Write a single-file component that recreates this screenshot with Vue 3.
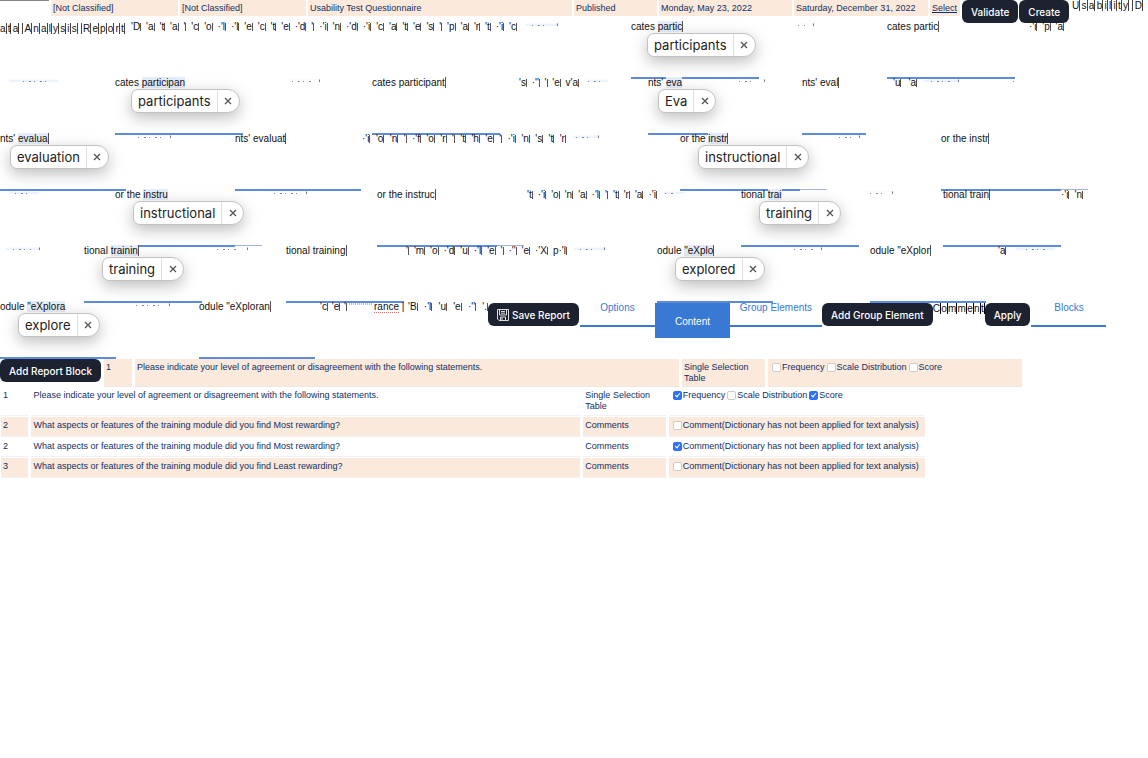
<script setup>
import { reactive } from 'vue'

const STRIP = 1148

const word = (x, pre, text, opts = {}) => ({ kind: 'word', x, pre, text, ...opts })
const keys = (x, end, list) => ({ kind: 'keys', x, end, list: list.split(' ') })
const marks = (x, end, opts = {}) => ({ kind: 'marks', x, end, ...opts })
const gap = (x) => ({ kind: 'gap', x })

const strips = [
  [
    { kind: 'title', x: 0 },
    keys(131, 517, "'D 'a 't 'a ' 'c 'o ·'l ·'l 'e 'c 't 'e ·'d ' ·'i 'n ·'d ·'i 'c 'a 't 'e 's ' 'p 'a 'r 't ·'i 'c"),
    marks(526, 558, { tint: true }), gap(558),
    word(631, 'cates ', 'partic', { hot: true, caret: true, line: 128, chip: 'participants', at: 16 }),
    marks(800, 814),
    word(887, 'cates ', 'partic', { caret: true, line: 128 }),
    keys(1029, 1064, "·'i 'p 'a"), gap(1064),
  ],
  [
    marks(9, 58, { tint: true, bare: true }), gap(58),
    word(115, 'cates ', 'participan', { hot: true, line: 128, chip: 'participants', at: 16 }),
    marks(285, 320), gap(320),
    word(372, 'cates ', 'participant', { caret: true, line: 128 }),
    keys(519, 579, "'s ·'' ' 'e v'a"),
    marks(587, 608, { tint: true, bare: true }), gap(608),
    word(648, "nts' ", 'eva', { hot: true, line: 64, chip: 'Eva', at: 10 }),
    marks(733, 765), gap(765),
    word(802, "nts' ", 'eval', { caret: true, line: 64 }),
    keys(893, 917, "'u 'a"),
    marks(924, 959, { tint: true }), gap(959),
    marks(1018, 1025, { bare: true }), gap(1025),
  ],
  [
    word(0, "nts' ", 'evalua', { hot: true, caret: true, line: 126, chip: 'evaluation', at: 10 }),
    marks(126, 171), gap(171),
    word(235, "nts' ", 'evaluat', { caret: true, line: 126 }),
    keys(362, 566, "·'i 'o 'n ' ·'f 'o 'r ' 't 'h 'e ' ·'i 'n 's 't 'r"),
    marks(573, 599, { tint: true }), gap(599),
    word(680, 'or the ', 'instr', { hot: true, caret: true, line: 120, tail: 27, chip: 'instructional', at: 18 }),
    marks(838, 860), gap(860),
    word(941, 'or the ', 'instr', { caret: true, line: 120, tail: 27 }),
  ],
  [
    marks(9, 39, { tint: true, bare: true }), gap(39),
    word(115, 'or the ', 'instru', { hot: true, line: 120, tail: 27, chip: 'instructional', at: 18 }),
    marks(262, 307), gap(307),
    word(377, 'or the ', 'instruc', { caret: true, line: 120, tail: 27 }),
    keys(527, 657, "'t ·'i 'o 'n 'a ·'l ' 't 'r 'a ·'i"),
    marks(664, 684, { bare: true, tint: true }), gap(684),
    word(741, 'tional ', 'trai', { hot: true, line: 118, chip: 'training', at: 18 }),
    marks(866, 893), gap(893),
    word(943, 'tional ', 'train', { caret: true, line: 118 }),
    keys(1061, 1083, "·'i 'n"), gap(1083),
  ],
  [
    marks(6, 40, { tint: true }), gap(40),
    word(84, 'tional ', 'trainin', { hot: true, caret: true, line: 118, chip: 'training', at: 18 }),
    marks(207, 248), gap(248),
    word(286, 'tional ', 'training', { caret: true, line: 118 }),
    keys(406, 567, "' 'm 'o ·'d 'u ·'l 'e ' ·'' 'e ·'X p·'l"),
    marks(574, 605, { tint: true }), gap(605),
    word(657, 'odule ', '"eXplo', { hot: true, caret: true, line: 116, chip: 'explored', at: 18 }),
    marks(787, 822), gap(822),
    word(870, 'odule ', '"eXplor', { caret: true, line: 116 }),
    keys(998, 1008, "'a"),
    marks(1016, 1055, { tint: true, bare: true }), gap(1055),
  ],
]

const lastStrip = [
  word(0, 'odule ', '"eXplora', { hot: true, line: 116, chip: 'explore', at: 18 }),
  marks(124, 170), gap(170),
  word(199, 'odule ', '"eXploran', { caret: true, line: 116 }),
  keys(320, 347, "'c 'e '"),
  { kind: 'squiggle', x: 349 },
  { kind: 'flagged', x: 374 },
  keys(408, 488, "'B ·'l 'u 'e ·'' '."),
  { kind: 'tools', x: 488 },
]

const columns = (tiles) => {
  const tracks = tiles[0].x > 0 ? [tiles[0].x] : []
  tiles.forEach((t, i) => tracks.push((tiles[i + 1]?.x ?? STRIP) - t.x))
  return tracks.map((n) => `minmax(0, ${n}fr)`).join(' ')
}
const startColumn = (tiles, i) => i + (tiles[0].x > 0 ? 2 : 1)
const allStrips = [...strips, lastStrip]

const q1 = 'Please indicate your level of agreement or disagreement with the following statements.'
const q2 = 'What aspects or features of the training module did you find Most rewarding?'
const q3 = 'What aspects or features of the training module did you find Least rewarding?'
const note = 'Comment(Dictionary has not been applied for text analysis)'

const scaleOptions = (a, b, c) => [
  { label: 'Frequency', on: a },
  { label: 'Scale Distribution', on: b },
  { label: 'Score', on: c },
]
const draft = reactive(scaleOptions(false, false, false))
const rows = reactive([
  { n: 1, text: q1, type: 'Single Selection Table', options: scaleOptions(true, false, true) },
  { n: 2, text: q2, type: 'Comments', options: [{ label: note, on: false }] },
  { n: 2, text: q2, type: 'Comments', options: [{ label: note, on: true }] },
  { n: 3, text: q3, type: 'Comments', options: [{ label: note, on: false }] },
])
</script>

<template>
  <main class="page">
    <header class="top">
      <span class="stub"></span>
      <span class="cell">[Not Classified]</span>
      <span class="cell">[Not Classified]</span>
      <span class="cell">Usability Test Questionnaire</span>
      <span class="cell">Published</span>
      <span class="cell">Monday, May 23, 2022</span>
      <span class="cell">Saturday, December 31, 2022</span>
      <span class="cell"><a href="#">Select</a></span>
      <div class="actions">
        <button class="dark" type="button">Validate</button>
        <button class="dark" type="button">Create</button>
      </div>
      <div class="letters"><span v-for="(c, i) in 'Usability D'" :key="i">{{ c }}</span></div>
    </header>

    <section
      v-for="(tiles, s) in allStrips"
      :key="s"
      class="strip"
      :style="{ gridTemplateColumns: columns(tiles) }"
    >
      <div v-for="(t, i) in tiles" :key="i" class="tile" :style="{ gridColumn: startColumn(tiles, i) }">
        <div v-if="t.kind === 'title'" class="letters wide">
          <span v-for="(c, k) in 'ata Analysis Report'" :key="k">{{ c }}</span>
        </div>

        <template v-else-if="t.kind === 'word'">
          <p class="snippet">{{ t.pre }}<span :class="{ hot: t.hot, caret: t.caret }">{{ t.text }}</span></p>
          <div v-if="t.chip" class="chip" :style="{ left: t.at + 'px' }">
            <button type="button" class="pick">{{ t.chip }}</button>
            <button type="button" class="dismiss" aria-label="Dismiss">
              <svg viewBox="0 0 8 8" width="8" height="8"><path d="M1 1l6 6M7 1l-6 6" /></svg>
            </button>
          </div>
          <div class="rule">
            <i class="full" :style="{ width: t.line + 'px' }"></i>
            <i v-if="t.tail" class="tail" :style="{ width: t.tail + 'px' }"></i>
          </div>
        </template>

        <div v-else-if="t.kind === 'keys'" class="keys" :style="{ width: t.end - t.x + 'px' }">
          <span v-for="(k, n) in t.list" :key="n">{{ k }}</span>
        </div>

        <div
          v-else-if="t.kind === 'marks'"
          class="marks"
          :class="{ tint: t.tint, bare: t.bare }"
          :style="{ width: t.end - t.x + 'px' }"
        ><i></i></div>

        <div v-else-if="t.kind === 'squiggle'" class="squiggle"></div>
        <p v-else-if="t.kind === 'flagged'" class="snippet"><span class="flagged">rance</span> |</p>

        <div v-else-if="t.kind === 'tools'" class="tools">
          <button class="dark save" type="button">
            <svg viewBox="0 0 12 12" width="12" height="12">
              <path d="M.5 .5h11v11h-9.500l-1.500-1.500zM2.500 .5v5.500h7v-5.500M3.500 11.500v-3.500h5v3.500M5 8.500v2.500M4 2.500h4M4 4.200h4" />
            </svg>
            Save Report
          </button>
          <a class="tab" href="#">Options</a>
          <a class="tab active" href="#">Content</a>
          <a class="tab group" href="#">Group Elements</a>
          <button class="dark" type="button">Add Group Element</button>
          <div class="letters comment"><span v-for="(c, k) in 'Comment'" :key="k">{{ c }}</span></div>
          <button class="dark" type="button">Apply</button>
          <a class="tab blocks" href="#">Blocks</a>
        </div>
      </div>
    </section>

    <section class="draft">
      <button class="dark" type="button">Add Report Block</button>
      <span class="cell">1</span>
      <span class="cell">{{ q1 }}</span>
      <span class="cell">Single Selection Table</span>
      <div class="cell options">
        <label v-for="o in draft" :key="o.label"><input v-model="o.on" type="checkbox" />{{ o.label }}</label>
      </div>
    </section>

    <table class="blocks-table">
      <colgroup><col class="c-n" /><col class="c-q" /><col class="c-t" /><col class="c-o" /></colgroup>
      <tbody>
        <tr v-for="(r, i) in rows" :key="i" :class="{ shaded: i % 2 }">
          <td>{{ r.n }}</td>
          <td>{{ r.text }}</td>
          <td>{{ r.type }}</td>
          <td>
            <div class="options">
              <label v-for="o in r.options" :key="o.label"><input v-model="o.on" type="checkbox" />{{ o.label }}</label>
            </div>
          </td>
        </tr>
      </tbody>
    </table>
  </main>
</template>

<style>
body { background: #fff; }
</style>

<style scoped>
.page {
  font: 9px/11px "Liberation Sans", Arial, sans-serif;
  color: #0f2f66;
  overflow: hidden;
}
p { margin: 0; }
button { font: inherit; border: 0; padding: 0; background: none; color: inherit; }
a { color: inherit; }

.top {
  display: grid;
  grid-template-columns: 49fr 127fr 126fr 264fr 83fr 133fr 134fr 30fr 108fr 76fr;
  column-gap: 2px;
  height: 23px;
  align-items: start;
  white-space: nowrap;
}
.cell { background: #fbe9db; padding: 3px 2px 2px; }
.top > * { min-width: 0; }
.stub { height: 1px; background: #85858c; }
.actions { display: flex; gap: 1px; }
.dark {
  height: 23px;
  padding: 0 9px;
  flex: none;
  border-radius: 6px;
  background: #1c2230;
  color: #fff;
  font: 500 10px/22px Inter, sans-serif;
  white-space: nowrap;
}

.letters {
  display: flex;
  justify-content: space-between;
  width: 71px;
  font-size: 10px;
  line-height: 12px;
  color: #111;
}
.letters span { border-right: 1px solid #444; min-width: 2px; height: 11px; }
.letters.wide { width: 125px; }
.letters.comment { width: 52px; flex: none; }
.letters.comment span { border-color: #000; }

.strip { display: grid; height: 56px; }
.tile { position: relative; min-width: 0; height: 56px; white-space: nowrap; }
.snippet {
  height: 9px;
  font-size: 10px;
  line-height: 7px;
  color: #111;
}
.hot { background: #e6edfa; }
.caret { border-right: 1px solid #555; }
.rule { position: absolute; left: 0; bottom: 0; display: flex; height: 2px; }
.rule i { flex: none; }
.full { height: 2px; background: #5f8bdc; }
.tail { height: 1px; background: #a3b2da; }

.keys {
  display: flex;
  justify-content: space-between;
  height: 8px;
  font-size: 10px;
  line-height: 7px;
  color: #111;
}
.keys span { border-right: 1px solid #555; }

.marks { position: relative; height: 3px; border-top: 1px solid #fafafa; box-sizing: border-box; }
.marks.tint { background: #edf3fc; }
.marks i {
  position: absolute;
  right: 8px;
  bottom: 0;
  width: 55%;
  height: 1px;
  background: repeating-linear-gradient(90deg, #888 0 1px, transparent 1px 6px, #888 6px 8px, transparent 8px 11px);
}
.marks:not(.bare) { border-right: 1px solid #777; }

.chip {
  position: absolute;
  top: 10px;
  z-index: 2;
  display: flex;
  height: 22px;
  border: 1px solid #c2c2c2;
  border-radius: 7px 12px 12px 7px;
  background: #fff;
  box-shadow: 0 5px 16px rgba(0, 0, 0, 0.26);
  color: #222;
}
.pick { padding: 0 6px; font: 13px/20px "Inter", sans-serif; }
.dismiss { width: 22px; border-left: 1px solid #ddd; display: grid; place-items: center; }
.dismiss path { stroke: #555; stroke-width: 1.300; fill: none; }

.squiggle { width: 24px; height: 2px; background: repeating-linear-gradient(90deg, #f0a8a8 0 1px, transparent 1px 2px); }
.flagged { border-bottom: 1px dotted #e66; }

.tools { display: flex; align-items: flex-start; }
.save { display: flex; align-items: center; gap: 3px; margin-right: 1px; }
.save path { fill: none; stroke: #ddd; }
.tab {
  flex: none;
  width: 75px;
  height: 22px;
  border-bottom: 2px solid #3978d3;
  font: 10px/10px "Liberation Sans", Arial, sans-serif;
  text-align: center;
  text-decoration: none;
  color: #3978d3;
}
.tab.active { height: 35px; border: 0; background: #3978d3; color: #fff; line-height: 37px; }
.tab.group { width: 92px; }
.tab.blocks { margin-left: 1px; }

.draft {
  display: grid;
  grid-template-columns: 101fr 28fr 544fr 83fr 254fr 123fr;
  column-gap: 3px;
}
.draft .dark { justify-self: start; }
.draft .cell { padding: 3px 2px 2px; border-bottom: 1px solid #eee6e0; }
.options { display: flex; align-items: flex-start; white-space: nowrap; }
label { display: flex; align-items: center; gap: 1px; height: 11px; }
input {
  appearance: none;
  flex: none;
  position: relative;
  width: 9px;
  height: 9px;
  margin: 0 0 0 2px;
  border: 1px solid #ccc;
  border-radius: 2px;
  background: #fff;
}
input:checked { background: #2f72f6; border-color: #2f72f6; }
input:checked::after {
  content: "";
  position: absolute;
  left: 2px;
  top: 0;
  width: 2px;
  height: 4px;
  border: solid #fff;
  border-width: 0 1px 1px 0;
  transform: rotate(40deg);
}

.blocks-table {
  width: 81%;
  table-layout: fixed;
  border-collapse: separate;
  border-spacing: 3px 1px;
  margin-left: -2px;
  margin-top: -1px;
}
.c-n { width: 3%; }
.c-q { width: 60%; }
.c-t { width: 9%; }
td { padding: 3px 2px; vertical-align: top; height: 12px; border-bottom: 1px solid #f1f1f3; }
.shaded td { background: #fbe9db; padding-bottom: 4px; }
</style>
